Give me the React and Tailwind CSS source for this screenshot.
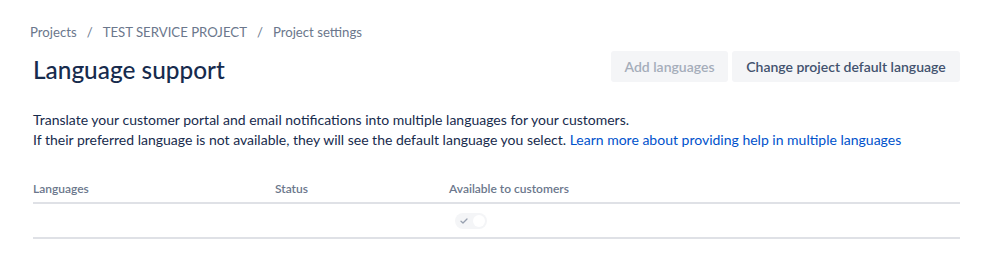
import React from "react";

const font = { fontFamily: "Lato, 'Liberation Sans', sans-serif" };

const Toggle = () => (
  <div className="w-[32px] h-[16px] rounded-full bg-[#f4f5f7] relative">
    <svg className="absolute left-[5px] top-[4px]" width="8" height="8" viewBox="0 0 8 8">
      <path d="M1 4.2 L3 6 L7 2" stroke="#97a0af" strokeWidth="1.3" fill="none" strokeLinecap="round" strokeLinejoin="round" />
    </svg>
    <span className="absolute right-[2px] top-[2px] w-[12px] h-[12px] rounded-full bg-white" />
  </div>
);

export default function App() {
  return (
    <div className="w-[999px] h-[268px] bg-white text-[#172b4d]" style={font}>
      <div className="pl-[30px] pr-[39px] pt-[22px]">
        {/* Breadcrumbs */}
        <div className="flex items-center text-[13.2px] leading-[20px] text-[#6b778c]">
          <span>Projects</span>
          <span className="px-[10px]">/</span>
          <span>TEST SERVICE PROJECT</span>
          <span className="px-[10px]">/</span>
          <span>Project settings</span>
        </div>

        {/* Title + actions */}
        <div className="flex items-start justify-between mt-[9px] pl-[3px]">
          <h1 className="text-[24.4px] leading-[32px] font-medium text-[#172b4d] mt-[3px]">Language support</h1>
          <div className="flex gap-[4px]">
            <button className="h-[31px] w-[117px] rounded-[3px] bg-[#f4f5f7] text-[14px] font-semibold text-[#a5adba]">
              Add languages
            </button>
            <button className="h-[31px] w-[228px] rounded-[3px] bg-[#f4f5f7] text-[14px] font-semibold text-[#42526e]">
              Change project default language
            </button>
          </div>
        </div>

        {/* Description */}
        <div className="pl-[3px] mt-[24px] text-[14px] leading-[20px] text-[#172b4d]">
          <p>Translate your customer portal and email notifications into multiple languages for your customers.</p>
          <p>
            If their preferred language is not available, they will see the default language you select.{" "}
            <a className="text-[#0052cc]" href="#">Learn more about providing help in multiple languages</a>
          </p>
        </div>

        {/* Table */}
        <div className="pl-[3px] mt-[31px]">
          <div className="grid grid-cols-[242px_174px_1fr] text-[12px] leading-[16px] font-semibold text-[#6b778c] pb-[5px] border-b-2 border-[#dfe1e6]">
            <span>Languages</span>
            <span>Status</span>
            <span>Available to customers</span>
          </div>
          <div className="grid grid-cols-[242px_174px_1fr] h-[35px] items-center border-b-2 border-[#dfe1e6]">
            <span />
            <span />
            <div className="pl-[6px]">
              <Toggle />
            </div>
          </div>
        </div>
      </div>
    </div>
  );
}
